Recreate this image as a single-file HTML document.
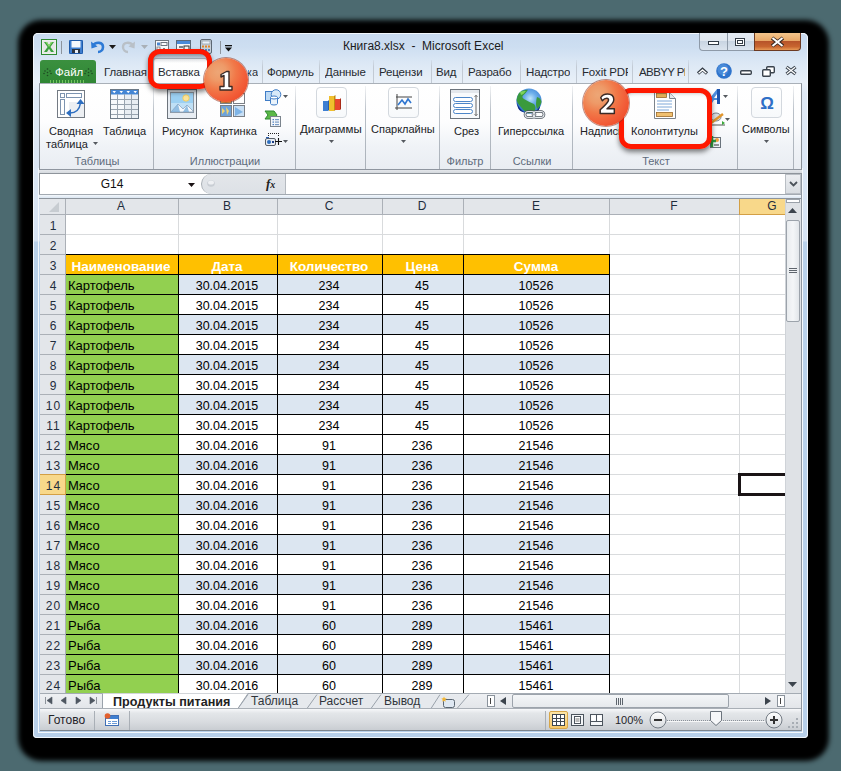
<!DOCTYPE html>
<html><head><meta charset="utf-8"><style>
html,body{margin:0;padding:0;}
body{width:841px;height:771px;position:relative;overflow:hidden;background:#4c6a70;font-family:"Liberation Sans", sans-serif;}
svg{overflow:visible}
</style></head><body>
<div style="position:absolute;left:33px;top:33px;width:775px;height:705px;background:#000;border-radius:8px;box-shadow:3px 5px 5px 18px #000;"></div><div style="position:absolute;left:33px;top:33px;width:775px;height:705px;background:linear-gradient(#c8daef 0px,#cddef1 14px,#dce8f5 30px,#e9f0f8 50px,#dfe9f5 60px,#d6e3f3 208px,#b9d1ea 209px,#b8d0ea);border-radius:5px 5px 4px 4px;box-shadow:inset 0 0 0 1px #f2f7fc;"></div><div style="position:absolute;left:38px;top:168px;width:765px;height:565px;border:1px solid #f4f8fc;box-sizing:border-box;"></div><div style="position:absolute;left:343px;top:40px;font-size:12px;line-height:1.149;white-space:nowrap;color:#1b1b1b;font-weight:normal;">Книга8.xlsx&nbsp; - &nbsp;Microsoft Excel</div><svg style="position:absolute;left:41px;top:39px;" width="16" height="16" viewBox="0 0 16 16"><rect x="0.5" y="0.5" width="15" height="15" fill="#f4f6f4" stroke="#2f8a32"/>
<rect x="1.5" y="1.5" width="13" height="13" fill="#e6e8e6"/>
<path d="M3 3h3l2 3.2L10 3h3l-3.6 5L13 13h-3l-2-3.3L6 13H3l3.6-5z" fill="#3aa23c"/>
<path d="M3 3h3l2 3.2L10 3h1.5L8 8 4.5 3z" fill="#8fdc6a"/></svg><svg style="position:absolute;left:61px;top:41px;" width="1" height="13" viewBox="0 0 1 13"><rect width="1" height="13" fill="#8d959e"/></svg><svg style="position:absolute;left:69px;top:40px;" width="14" height="14" viewBox="0 0 14 14"><rect x="0" y="0" width="14" height="14" rx="1" fill="#3f7fd0"/>
<rect x="2.5" y="0.5" width="9" height="7" fill="#f6f9fd"/>
<rect x="3" y="9" width="8" height="5" fill="#2c3440"/>
<rect x="6" y="10" width="3" height="3" fill="#e8eef6"/>
<rect x="0.5" y="0.5" width="13" height="13" rx="1" fill="none" stroke="#1f5aa8"/></svg><svg style="position:absolute;left:91px;top:40px;" width="14" height="13" viewBox="0 0 14 13"><path d="M2 5.5 C5 1.5 12 2 12 7 C12 10 9.5 12 7 12" fill="none" stroke="#2d7ad6" stroke-width="2.6"/>
<path d="M0 1.5 L0.5 8.5 L6.5 6.5z" fill="#2d7ad6"/></svg><svg style="position:absolute;left:109px;top:45px;" width="7" height="4" viewBox="0 0 7 4"><path d="M0 0h7L3.5 4z" fill="#1a1a1a"/></svg><svg style="position:absolute;left:122px;top:40px;" width="13" height="13" viewBox="0 0 13 13"><path d="M11 5.5 C8 1.5 1 2 1 7 C1 10 3.5 12 6 12" fill="none" stroke="#b9c0c7" stroke-width="2.4"/>
<path d="M13 1.5 L12.5 8.5 L6.5 6.5z" fill="#b9c0c7"/></svg><svg style="position:absolute;left:141px;top:45px;" width="7" height="4" viewBox="0 0 7 4"><path d="M0 0h7L3.5 4z" fill="#a9b0b7"/></svg><svg style="position:absolute;left:155px;top:40px;" width="14" height="13" viewBox="0 0 14 13"><rect x="0.5" y="0.5" width="13" height="12" fill="#fafbfc" stroke="#6f7780"/>
<rect x="2" y="2.5" width="3" height="3" fill="#4a86d0"/><rect x="6" y="2.5" width="6" height="3" fill="none" stroke="#6f7780"/>
<rect x="2" y="7" width="3" height="5" fill="none" stroke="#6f7780" stroke-width="0.8"/><path d="M9 8v4M7 10h4" stroke="#333" stroke-width="1.2"/></svg><svg style="position:absolute;left:176px;top:40px;" width="15" height="13" viewBox="0 0 15 13"><rect x="0.5" y="0.5" width="14" height="12" fill="#f4f6f8" stroke="#5c6a7a"/>
<rect x="1" y="1" width="13" height="3" fill="#4a8ad8"/>
<rect x="3" y="6" width="4" height="2" fill="#7a838c"/><rect x="8" y="6" width="5" height="4" fill="none" stroke="#333" stroke-width="1"/></svg><svg style="position:absolute;left:200px;top:39px;" width="12" height="15" viewBox="0 0 12 15"><rect x="0.5" y="0.5" width="11" height="14" rx="1.5" fill="#c9d3dd" stroke="#5d6873"/>
<rect x="2" y="2" width="8" height="3" fill="#e9f1fa" stroke="#7c8893" stroke-width="0.6"/>
<g fill="#e0862a"><rect x="2" y="6.5" width="2" height="2"/><rect x="5" y="6.5" width="2" height="2"/><rect x="8" y="6.5" width="2" height="2"/></g>
<g fill="#4f88c8"><rect x="2" y="10" width="2" height="2"/><rect x="5" y="10" width="2" height="2"/><rect x="8" y="10" width="2" height="2"/></g></svg><svg style="position:absolute;left:220px;top:41px;" width="1" height="13" viewBox="0 0 1 13"><rect width="1" height="13" fill="#8d959e"/></svg><svg style="position:absolute;left:225px;top:45px;" width="7" height="7" viewBox="0 0 7 7"><rect x="0" y="0" width="7" height="1.3" fill="#111"/><path d="M0 2.5h7L3.5 6.5z" fill="#111"/></svg><div style="position:absolute;left:699px;top:33px;width:28px;height:18px;background:linear-gradient(#e4ebf3,#dfe6ee 45%,#c9d5e2 50%,#dbe4ee);border:1px solid #8e9aa8;border-top:none;border-right:none;border-radius:0 0 0 4px;box-sizing:border-box;"></div><div style="position:absolute;left:727px;top:33px;width:27px;height:18px;background:linear-gradient(#e4ebf3,#dfe6ee 45%,#c9d5e2 50%,#dbe4ee);border:1px solid #8e9aa8;border-top:none;border-right:none;box-sizing:border-box;"></div><div style="position:absolute;left:754px;top:33px;width:47px;height:18px;background:linear-gradient(#f3c58c,#e9a968 45%,#b7542a 50%,#c8652f 80%,#e79a55);border:1px solid #6c3a22;border-top:none;border-radius:0 0 4px 0;box-sizing:border-box;"></div><svg style="position:absolute;left:708px;top:41px;" width="11" height="4" viewBox="0 0 11 4"><rect x="0.5" y="0.5" width="10" height="3" fill="#fff" stroke="#333c46"/></svg><svg style="position:absolute;left:735px;top:38px;" width="10" height="8" viewBox="0 0 10 8"><rect x="0.5" y="0.5" width="9" height="7" fill="#fff" stroke="#333c46"/><rect x="2.5" y="2.5" width="5" height="3" fill="none" stroke="#333c46"/></svg><svg style="position:absolute;left:771px;top:37px;" width="13" height="10" viewBox="0 0 13 10"><path d="M1 1 L12 9 M12 1 L1 9" stroke="#3a2a22" stroke-width="4"/><path d="M1.5 1 L11.5 9 M11.5 1 L1.5 9" stroke="#fff" stroke-width="2"/></svg><div style="position:absolute;left:40px;top:60px;width:56px;height:24px;background:linear-gradient(#3b903f,#2f8634);border-radius:3px 3px 0 0;"></div><div style="position:absolute;left:55px;top:66px;font-size:11.5px;line-height:1.149;white-space:nowrap;color:#ffffff;font-weight:normal;">Файл</div><svg style="position:absolute;left:43px;top:68px;" width="9" height="9" viewBox="0 0 9 9"><g fill="#1e4a22"><circle cx="4.5" cy="1" r="0.8"/><circle cx="2" cy="3" r="0.8"/><circle cx="7" cy="3" r="0.8"/><circle cx="4.5" cy="4.5" r="0.8"/><circle cx="1" cy="5.5" r="0.8"/><circle cx="8" cy="5.5" r="0.8"/><circle cx="4.5" cy="7.5" r="0.8"/></g></svg><svg style="position:absolute;left:84px;top:68px;" width="9" height="9" viewBox="0 0 9 9"><g fill="#1e4a22"><circle cx="4.5" cy="1" r="0.8"/><circle cx="2" cy="3" r="0.8"/><circle cx="7" cy="3" r="0.8"/><circle cx="4.5" cy="4.5" r="0.8"/><circle cx="1" cy="5.5" r="0.8"/><circle cx="8" cy="5.5" r="0.8"/><circle cx="4.5" cy="7.5" r="0.8"/></g></svg><div style="position:absolute;left:50px;top:80px;width:36px;height:3px;background:repeating-linear-gradient(90deg,#8fe070 0 1px,transparent 1px 3px);opacity:0.7;"></div><div style="position:absolute;left:153px;top:58px;width:55px;height:26px;background:linear-gradient(#ffffff,#fbfcfd);border:1px solid #aab2bc;border-bottom:none;border-radius:3px 3px 0 0;box-sizing:border-box;"></div><div style="position:absolute;left:104px;top:66px;width:80px;overflow:hidden;font-size:11.5px;letter-spacing:-0.15px;line-height:1.149;white-space:nowrap;color:#262a30">Главная</div><div style="position:absolute;left:158px;top:66px;width:80px;overflow:hidden;font-size:11.5px;letter-spacing:-0.15px;line-height:1.149;white-space:nowrap;color:#262a30">Вставка</div><div style="position:absolute;left:267px;top:66px;width:48px;overflow:hidden;font-size:11.5px;letter-spacing:-0.15px;line-height:1.149;white-space:nowrap;color:#262a30">Формуль</div><div style="position:absolute;left:325px;top:66px;width:80px;overflow:hidden;font-size:11.5px;letter-spacing:-0.15px;line-height:1.149;white-space:nowrap;color:#262a30">Данные</div><div style="position:absolute;left:379px;top:66px;width:45px;overflow:hidden;font-size:11.5px;letter-spacing:-0.15px;line-height:1.149;white-space:nowrap;color:#262a30">Рецензи</div><div style="position:absolute;left:436px;top:66px;width:80px;overflow:hidden;font-size:11.5px;letter-spacing:-0.15px;line-height:1.149;white-space:nowrap;color:#262a30">Вид</div><div style="position:absolute;left:468px;top:66px;width:47px;overflow:hidden;font-size:11.5px;letter-spacing:-0.15px;line-height:1.149;white-space:nowrap;color:#262a30">Разрабо</div><div style="position:absolute;left:526px;top:66px;width:44px;overflow:hidden;font-size:11.5px;letter-spacing:-0.15px;line-height:1.149;white-space:nowrap;color:#262a30">Надстро</div><div style="position:absolute;left:582px;top:66px;width:46px;overflow:hidden;font-size:11.5px;letter-spacing:-0.15px;line-height:1.149;white-space:nowrap;color:#262a30">Foxit PDF</div><div style="position:absolute;left:639px;top:66px;width:46px;overflow:hidden;font-size:11.5px;letter-spacing:-0.6px;line-height:1.149;white-space:nowrap;color:#262a30">ABBYY PDF</div><div style="position:absolute;left:248px;top:66px;width:10px;overflow:hidden;font-size:11px;line-height:1.149;white-space:nowrap;color:#2b2f36;direction:rtl">ка</div><div style="position:absolute;left:262px;top:60px;width:1px;height:23px;background:linear-gradient(rgba(190,200,212,0.3),#c2cad4 30%,#c2cad4);"></div><div style="position:absolute;left:319px;top:60px;width:1px;height:23px;background:linear-gradient(rgba(190,200,212,0.3),#c2cad4 30%,#c2cad4);"></div><div style="position:absolute;left:373px;top:60px;width:1px;height:23px;background:linear-gradient(rgba(190,200,212,0.3),#c2cad4 30%,#c2cad4);"></div><div style="position:absolute;left:431px;top:60px;width:1px;height:23px;background:linear-gradient(rgba(190,200,212,0.3),#c2cad4 30%,#c2cad4);"></div><div style="position:absolute;left:462px;top:60px;width:1px;height:23px;background:linear-gradient(rgba(190,200,212,0.3),#c2cad4 30%,#c2cad4);"></div><div style="position:absolute;left:520px;top:60px;width:1px;height:23px;background:linear-gradient(rgba(190,200,212,0.3),#c2cad4 30%,#c2cad4);"></div><div style="position:absolute;left:576px;top:60px;width:1px;height:23px;background:linear-gradient(rgba(190,200,212,0.3),#c2cad4 30%,#c2cad4);"></div><div style="position:absolute;left:632px;top:60px;width:1px;height:23px;background:linear-gradient(rgba(190,200,212,0.3),#c2cad4 30%,#c2cad4);"></div><div style="position:absolute;left:688px;top:60px;width:1px;height:23px;background:linear-gradient(rgba(190,200,212,0.3),#c2cad4 30%,#c2cad4);"></div><svg style="position:absolute;left:697px;top:68px;" width="11" height="7" viewBox="0 0 11 7"><path d="M1 5.5 L5.5 1.5 L10 5.5" fill="none" stroke="#333b45" stroke-width="3.2"/><path d="M1.6 5.2 L5.5 1.9 L9.4 5.2" fill="none" stroke="#fff" stroke-width="1.3"/></svg><svg style="position:absolute;left:716px;top:63px;" width="16" height="16" viewBox="0 0 16 16"><circle cx="8" cy="8" r="7.8" fill="#2f74cc"/><circle cx="7" cy="6.5" r="5.5" fill="#5b9ae0" opacity="0.6"/><text x="8" y="12.6" text-anchor="middle" font-family="Liberation Sans" font-weight="bold" font-size="13" fill="#fff">?</text></svg><svg style="position:absolute;left:740px;top:70px;" width="12" height="5" viewBox="0 0 12 5"><rect x="0.7" y="0.7" width="10.6" height="3.6" rx="1" fill="#fff" stroke="#3a434d" stroke-width="1.4"/></svg><svg style="position:absolute;left:762px;top:66px;" width="13" height="11" viewBox="0 0 13 11"><rect x="4.7" y="0.7" width="7.6" height="6" rx="1" fill="#fff" stroke="#3a434d" stroke-width="1.4"/><rect x="0.7" y="3.7" width="7.6" height="6.6" rx="1" fill="#fff" stroke="#3a434d" stroke-width="1.4"/></svg><svg style="position:absolute;left:785px;top:66px;" width="12" height="9" viewBox="0 0 12 9"><path d="M1.5 1 L10.5 8 M10.5 1 L1.5 8" stroke="#3a434d" stroke-width="3.4"/><path d="M1.8 1.2 L10.2 7.8 M10.2 1.2 L1.8 7.8" stroke="#fff" stroke-width="1.3"/></svg><div style="position:absolute;left:39px;top:83px;width:763px;height:87px;background:linear-gradient(#ffffff,#fdfdfe 45%,#f0f3f7 72%,#e9edf2);border:1px solid #8a9199;border-top-color:#a9b0b8;border-bottom-color:#8f969f;box-sizing:border-box;"></div><div style="position:absolute;left:39px;top:170px;width:763px;height:4px;background:linear-gradient(#e4e7eb,#d5d9de);border-bottom:1px solid #8e949b;box-sizing:border-box;"></div><div style="position:absolute;left:153px;top:86px;width:1px;height:83px;background:linear-gradient(rgba(190,196,204,0.2),#b9c0c8 30%,#aab1b9);"></div><div style="position:absolute;left:295px;top:86px;width:1px;height:83px;background:linear-gradient(rgba(190,196,204,0.2),#b9c0c8 30%,#aab1b9);"></div><div style="position:absolute;left:365px;top:86px;width:1px;height:83px;background:linear-gradient(rgba(190,196,204,0.2),#b9c0c8 30%,#aab1b9);"></div><div style="position:absolute;left:439px;top:86px;width:1px;height:83px;background:linear-gradient(rgba(190,196,204,0.2),#b9c0c8 30%,#aab1b9);"></div><div style="position:absolute;left:490px;top:86px;width:1px;height:83px;background:linear-gradient(rgba(190,196,204,0.2),#b9c0c8 30%,#aab1b9);"></div><div style="position:absolute;left:572px;top:86px;width:1px;height:83px;background:linear-gradient(rgba(190,196,204,0.2),#b9c0c8 30%,#aab1b9);"></div><div style="position:absolute;left:737px;top:86px;width:1px;height:83px;background:linear-gradient(rgba(190,196,204,0.2),#b9c0c8 30%,#aab1b9);"></div><div style="position:absolute;left:793px;top:86px;width:1px;height:83px;background:linear-gradient(rgba(190,196,204,0.2),#b9c0c8 30%,#aab1b9);"></div><svg style="position:absolute;left:57px;top:90px;" width="28" height="28" viewBox="0 0 28 28"><rect x="0.5" y="0.5" width="27" height="27" fill="#fff" stroke="#737a83"/>
<path d="M12 12 L27 12 L27 27 L12 27z" fill="#eceff3"/>
<rect x="3.5" y="3.5" width="4" height="4" fill="#fff" stroke="#7d94b0"/>
<rect x="9.5" y="3.5" width="15" height="4" fill="#fff" stroke="#7d94b0"/>
<rect x="3.5" y="9.5" width="4" height="15" fill="#fff" stroke="#7d94b0"/>
<path d="M13 23 Q22 23 23.5 13" fill="none" stroke="#2d6ec0" stroke-width="1.5"/>
<path d="M9 23 L14 19 L14 27z" fill="#2d6ec0"/><path d="M23.5 9 L19.5 14 L27.5 14z" fill="#2d6ec0"/></svg><svg style="position:absolute;left:110px;top:89px;" width="29" height="30" viewBox="0 0 29 30"><rect x="0.5" y="0.5" width="28" height="29" fill="#f7f9fb" stroke="#6c7986"/>
<rect x="1" y="1" width="27" height="4.5" fill="#4486d4"/>
<g fill="#e9eef3"><rect x="15" y="6" width="13" height="23"/></g>
<g stroke="#98a3ae" stroke-width="1"><path d="M1 10.5h27M1 15.5h27M1 20.5h27M1 25.5h27M7.5 5v24M14.5 5v24M21.5 5v24"/></g>
<g fill="#fff"><path d="M2.5 2h3.5l-1.75 2.2z M9.5 2h3.5l-1.75 2.2z M16.5 2h3.5l-1.75 2.2z M23.5 2h3.5l-1.75 2.2z"/></g></svg><div style="position:absolute;left:49px;top:125px;font-size:11px;line-height:1.149;white-space:nowrap;color:#202226;font-weight:normal;">Сводная</div><div style="position:absolute;left:46px;top:138px;font-size:11px;line-height:1.149;white-space:nowrap;color:#202226;font-weight:normal;">таблица</div><svg style="position:absolute;left:93px;top:142px;" width="5" height="3" viewBox="0 0 5 3"><path d="M0 0h5L2.5 3z" fill="#55595f"/></svg><div style="position:absolute;left:103px;top:125px;font-size:11px;line-height:1.149;white-space:nowrap;color:#202226;font-weight:normal;">Таблица</div><div style="position:absolute;left:-53px;width:300px;text-align:center;top:155px;font-size:11px;line-height:1.149;white-space:nowrap;color:#5e6b7c;font-weight:normal;">Таблицы</div><svg style="position:absolute;left:167px;top:89px;" width="30" height="30" viewBox="0 0 30 30"><rect x="0.5" y="0.5" width="29" height="29" fill="#e8edf3" stroke="#6d747c"/>
<rect x="3.5" y="3.5" width="23" height="20" fill="#bfe0f6" stroke="#8d96a0"/>
<rect x="4" y="4" width="22" height="10" fill="#9cd0f2"/>
<circle cx="19" cy="9" r="3.2" fill="#fbe39a" stroke="#f0c850" stroke-width="0.8"/>
<path d="M4 23 L11 15 L16 20 L20 16 L26 22 L26 23z" fill="#f4f8fc" stroke="#8fa6bf" stroke-width="0.8"/>
<path d="M11 15 L13 23 L4 23z M20 16 L22 23 L16 23z" fill="#6aa6d8" opacity="0.7"/></svg><svg style="position:absolute;left:220px;top:93px;" width="26" height="24" viewBox="0 0 26 24"><rect x="0.5" y="0.5" width="11" height="10" fill="#d9a44a" stroke="#7a7f86"/>
<rect x="13.5" y="0.5" width="11" height="10" fill="#fff" stroke="#7a7f86"/>
<rect x="0.5" y="12.5" width="11" height="11" fill="#6fa3d8" stroke="#7a7f86"/>
<path d="M2 15l3 3 -3 3 M6 14l3 4 -2 4" fill="#f4d46c"/>
<rect x="13.5" y="12.5" width="11" height="11" fill="#c9dff4" stroke="#7a7f86"/>
<path d="M15 14 L23 19 L15 23z" fill="#7fb4e6"/></svg><div style="position:absolute;left:162px;top:125px;font-size:11px;line-height:1.149;white-space:nowrap;color:#202226;font-weight:normal;">Рисунок</div><div style="position:absolute;left:210px;top:125px;font-size:11px;line-height:1.149;white-space:nowrap;color:#202226;font-weight:normal;">Картинка</div><div style="position:absolute;left:75px;width:300px;text-align:center;top:155px;font-size:11px;line-height:1.149;white-space:nowrap;color:#5e6b7c;font-weight:normal;">Иллюстрации</div><svg style="position:absolute;left:265px;top:89px;" width="16" height="16" viewBox="0 0 16 16"><rect x="0.5" y="2.5" width="9" height="9" fill="#bcd9f4" stroke="#3f7cc6"/>
<circle cx="11" cy="5.5" r="4.8" fill="#d7e9f9" stroke="#3f7cc6"/>
<path d="M5.5 8.5 v6 a3.5 1.5 0 0 0 7 0 v-6" fill="#eaf3fb" stroke="#3f7cc6"/>
<ellipse cx="9" cy="8.5" rx="3.5" ry="1.5" fill="#fff" stroke="#3f7cc6"/></svg><svg style="position:absolute;left:283px;top:95px;" width="5" height="3" viewBox="0 0 5 3"><path d="M0 0h5L2.5 3z" fill="#55595f"/></svg><svg style="position:absolute;left:265px;top:111px;" width="16" height="16" viewBox="0 0 16 16"><path d="M0 0 L9 0 L12 4 L9 8 L0 8 L3 4z" fill="#5cb848" stroke="#2f8a32"/>
<rect x="5.5" y="5.5" width="10" height="10" fill="#f5f7f9" stroke="#7b848d"/>
<g fill="#4a7fc2"><rect x="7.5" y="8" width="1.5" height="1.2"/><rect x="7.5" y="10.5" width="1.5" height="1.2"/><rect x="7.5" y="13" width="1.5" height="1.2"/></g>
<g fill="#7a9cc6"><rect x="10" y="8" width="4" height="1.2"/><rect x="10" y="10.5" width="4" height="1.2"/><rect x="10" y="13" width="4" height="1.2"/></g></svg><svg style="position:absolute;left:265px;top:133px;" width="18" height="14" viewBox="0 0 18 14"><g fill="#222"><rect x="3" y="0" width="1" height="1"/><rect x="5" y="0" width="1" height="1"/><rect x="7" y="0" width="1" height="1"/><rect x="9" y="0" width="1" height="1"/><rect x="11" y="0" width="1" height="1"/><rect x="13" y="0" width="1" height="1"/><rect x="3" y="2" width="1" height="1"/><rect x="13" y="2" width="1" height="1"/></g>
<rect x="0.5" y="5.5" width="10" height="7" rx="1.5" fill="#e9edf2" stroke="#555c64"/>
<circle cx="4" cy="9" r="2" fill="#2d6fc0"/><rect x="7" y="8" width="2" height="2" fill="#1c3e86"/><rect x="1" y="4" width="3" height="1.2" fill="#2d5fb0"/>
<path d="M13.5 5v7M10 8.5h7" stroke="#111" stroke-width="1.1"/></svg><svg style="position:absolute;left:283px;top:140px;" width="5" height="3" viewBox="0 0 5 3"><path d="M0 0h5L2.5 3z" fill="#55595f"/></svg><div style="position:absolute;left:316px;top:87px;width:31px;height:31px;border:1px solid #d3d8de;border-radius:4px;box-sizing:border-box;background:linear-gradient(#fff,#f7f9fb);"></div><svg style="position:absolute;left:323px;top:95px;" width="18" height="17" viewBox="0 0 18 17"><path d="M0 6 h5 v10 h-5z" fill="#3d7fd3"/><path d="M5 6 l1.5 -1.5 v10 l-1.5 1.5z" fill="#2a5fa8"/>
<path d="M6 1 h5 v15 h-5z" fill="#f0bf2d"/><path d="M11 1 l1.5 -1 v15 l-1.5 1z" fill="#c08a10"/>
<path d="M12 4 h5 v11 h-5z" fill="#e8452e"/><path d="M17 4 l1 -1 v11 l-1 1z" fill="#a82a18"/></svg><div style="position:absolute;left:300px;top:123px;font-size:11.5px;line-height:1.149;white-space:nowrap;color:#202226;font-weight:normal;">Диаграммы</div><svg style="position:absolute;left:329px;top:140px;" width="5" height="3" viewBox="0 0 5 3"><path d="M0 0h5L2.5 3z" fill="#55595f"/></svg><div style="position:absolute;left:388px;top:87px;width:31px;height:31px;border:1px solid #d3d8de;border-radius:4px;box-sizing:border-box;background:linear-gradient(#fff,#f7f9fb);"></div><svg style="position:absolute;left:395px;top:94px;" width="17" height="16" viewBox="0 0 17 16"><path d="M2 0v16M0 14h17M1 3h16" stroke="#444" stroke-width="1"/>
<path d="M3 11 L7 6 L10 10 L13 5 L16 9" fill="none" stroke="#2f76d0" stroke-width="1.6"/></svg><div style="position:absolute;left:371px;top:123px;font-size:11px;line-height:1.149;white-space:nowrap;color:#202226;font-weight:normal;">Спарклайны</div><svg style="position:absolute;left:401px;top:140px;" width="5" height="3" viewBox="0 0 5 3"><path d="M0 0h5L2.5 3z" fill="#55595f"/></svg><svg style="position:absolute;left:450px;top:89px;" width="30" height="30" viewBox="0 0 30 30"><rect x="0.5" y="0.5" width="29" height="29" fill="#f8fafc" stroke="#6d747c"/>
<rect x="1" y="1" width="28" height="3" fill="#e3e7ec"/>
<g fill="#fff" stroke="#4d86c8"><rect x="3.5" y="8.5" width="19" height="4" rx="2"/><rect x="3.5" y="14.5" width="19" height="4" rx="2"/><rect x="3.5" y="20.5" width="19" height="4" rx="2"/></g>
<path d="M26 7v19" stroke="#666" stroke-width="1"/><path d="M24.5 8l1.5-2 1.5 2M24.5 25l1.5 2 1.5-2" fill="none" stroke="#666" stroke-width="0.8"/></svg><div style="position:absolute;left:454px;top:125px;font-size:11px;line-height:1.149;white-space:nowrap;color:#202226;font-weight:normal;">Срез</div><div style="position:absolute;left:315px;width:300px;text-align:center;top:155px;font-size:11px;line-height:1.149;white-space:nowrap;color:#5e6b7c;font-weight:normal;">Фильтр</div><svg style="position:absolute;left:515px;top:88px;" width="34" height="33" viewBox="0 0 34 33"><defs><radialGradient id="gl" cx="0.55" cy="0.4" r="0.65"><stop offset="0" stop-color="#bfe6fa"/><stop offset="0.35" stop-color="#6fb0ea"/><stop offset="0.8" stop-color="#3a7fd4"/><stop offset="1" stop-color="#1c4aa0"/></radialGradient></defs>
<circle cx="14" cy="13" r="12.6" fill="url(#gl)"/>
<path d="M4 5 Q8 1.5 13 1.8 Q11 5 8.5 7 Q6 9 9 11 Q14 14 19 16 Q22 19 19 24 Q16 25.5 12 25 Q8 22 5 18 Q2 15 1.6 12 Q2 8 4 5z" fill="#3a9a3c"/>
<path d="M5 4 Q8 2.5 11 3 Q9 6 6 7z" fill="#7ed35a"/>
<path d="M22 9 Q26 10 26.5 14 Q25 19 22 21 Q20 16 22 9z" fill="#3a9a3c"/>
<path d="M2 15 Q4 21 9 24 Q5 24 3 20z M19 24 Q23 22 25 18 Q25 22 21 24.5z" fill="#0c2a86"/>
<g fill="none" stroke="#4d555e" stroke-width="2.6"><rect x="10" y="23.5" width="10" height="6" rx="3"/><rect x="18" y="23.5" width="11" height="6" rx="3"/></g>
<g fill="none" stroke="#e4e8ec" stroke-width="1.1"><rect x="10" y="23.5" width="10" height="6" rx="3"/><rect x="18" y="23.5" width="11" height="6" rx="3"/></g></svg><div style="position:absolute;left:498px;top:125px;font-size:11px;line-height:1.149;white-space:nowrap;color:#202226;font-weight:normal;">Гиперссылка</div><div style="position:absolute;left:382px;width:300px;text-align:center;top:155px;font-size:11px;line-height:1.149;white-space:nowrap;color:#5e6b7c;font-weight:normal;">Ссылки</div><div style="position:absolute;left:580px;top:125px;font-size:11px;line-height:1.149;white-space:nowrap;color:#202226;font-weight:normal;">Надпись</div><svg style="position:absolute;left:654px;top:92px;" width="22" height="27" viewBox="0 0 22 27"><path d="M0.5 0.5 H15.5 L21.5 6.5 V26.5 H0.5z" fill="#fff" stroke="#7c838b"/>
<path d="M15.5 0.5 V6.5 H21.5" fill="#e6eaee" stroke="#7c838b"/>
<rect x="2.5" y="1.5" width="10" height="4" fill="#e7b25a" stroke="#9c6a2a" stroke-width="0.8"/>
<g stroke="#7fa8d8" stroke-width="1"><path d="M3 9h15M3 12h15M3 15h15M3 18h12"/></g>
<rect x="2.5" y="20.5" width="16" height="4" fill="#f0c070" stroke="#9c6a2a" stroke-width="0.8"/></svg><div style="position:absolute;left:631px;top:125px;font-size:11px;line-height:1.149;white-space:nowrap;color:#202226;font-weight:normal;">Колонтитулы</div><div style="position:absolute;left:506px;width:300px;text-align:center;top:155px;font-size:11px;line-height:1.149;white-space:nowrap;color:#5e6b7c;font-weight:normal;">Текст</div><svg style="position:absolute;left:710px;top:89px;" width="11" height="15" viewBox="0 0 11 15"><path d="M0 9 L7 0 L10 0 L10 15 L7 15 L7 11 L4 11 L2 14z" fill="#4e8ee0"/><path d="M7 0 L10 0 L10 15 L7 15z" fill="#1f56b0"/><path d="M4 9 L7 5 L7 9z" fill="#fff"/></svg><svg style="position:absolute;left:723px;top:95px;" width="5" height="3" viewBox="0 0 5 3"><path d="M0 0h5L2.5 3z" fill="#55595f"/></svg><svg style="position:absolute;left:710px;top:112px;" width="15" height="14" viewBox="0 0 15 14"><ellipse cx="6" cy="5" rx="5" ry="4" fill="#d8dde3" stroke="#7a838c"/><path d="M1 11 L13 2" stroke="#e2962c" stroke-width="2.4"/><path d="M1 13h14" stroke="#555" stroke-width="1"/><path d="M12 9 L15 11 L12 13z" fill="#3aa83a"/></svg><svg style="position:absolute;left:725px;top:118px;" width="5" height="3" viewBox="0 0 5 3"><path d="M0 0h5L2.5 3z" fill="#55595f"/></svg><svg style="position:absolute;left:707px;top:135px;" width="14" height="13" viewBox="0 0 14 13"><rect x="3.5" y="2.5" width="10" height="10" fill="#eef3f8" stroke="#6a737c"/><circle cx="10" cy="5" r="2" fill="#f0a040"/><path d="M5 1v11M1 6h8" stroke="#2f9a3a" stroke-width="2.4"/><path d="M7 10h5" stroke="#333" stroke-width="1"/></svg><div style="position:absolute;left:751px;top:87px;width:31px;height:31px;border:1px solid #d3d8de;border-radius:4px;box-sizing:border-box;background:linear-gradient(#fff,#f7f9fb);"></div><div style="position:absolute;left:617px;width:300px;text-align:center;top:94px;font-size:17px;line-height:1.149;white-space:nowrap;color:#2f6fc7;font-weight:bold;">Ω</div><div style="position:absolute;left:742px;top:123px;font-size:11px;line-height:1.149;white-space:nowrap;color:#202226;font-weight:normal;">Символы</div><svg style="position:absolute;left:764px;top:140px;" width="5" height="3" viewBox="0 0 5 3"><path d="M0 0h5L2.5 3z" fill="#55595f"/></svg><div style="position:absolute;left:39px;top:174px;width:762px;height:20px;background:#fff;border-left:1px solid #8e949b;box-sizing:border-box;"></div><div style="position:absolute;left:39px;top:194px;width:762px;height:5px;background:linear-gradient(#f4f8fc,#dbe6f2);border-top:1px solid #a3aab2;border-bottom:1px solid #8e959d;box-sizing:border-box;"></div><div style="position:absolute;left:-38px;width:300px;text-align:center;top:178px;font-size:12px;line-height:1.149;white-space:nowrap;color:#111;font-weight:normal;">G14</div><svg style="position:absolute;left:188px;top:183px;" width="7" height="4" viewBox="0 0 7 4"><path d="M0 0h7L3.5 4z" fill="#1a1214"/></svg><div style="position:absolute;left:201px;top:174px;width:85px;height:20px;background:linear-gradient(#e3e6ea,#dde1e6);border-left:1px solid #a8aeb5;border-right:1px solid #b5bac0;border-radius:10px 0 0 10px;box-sizing:border-box;"></div><svg style="position:absolute;left:207px;top:180px;" width="8" height="7" viewBox="0 0 8 7"><ellipse cx="4" cy="3.5" rx="3.8" ry="3.3" fill="#c9ced4"/><ellipse cx="4" cy="2.5" rx="3" ry="2" fill="#eef0f3"/></svg><div style="position:absolute;left:266px;top:177px;font-family:'Liberation Serif',serif;font-style:italic;font-weight:bold;font-size:13px;line-height:1;color:#222">f<span style="font-size:10px;position:relative;top:0px">x</span></div><div style="position:absolute;left:785px;top:174px;width:16px;height:20px;background:linear-gradient(#eceef1,#d9dde2);border:1px solid #b9bec4;box-sizing:border-box;"></div><svg style="position:absolute;left:789px;top:181px;" width="9" height="6" viewBox="0 0 9 6"><path d="M1 1 L4.5 4.5 L8 1" fill="none" stroke="#4c535b" stroke-width="1.8"/></svg><div style="position:absolute;left:40px;top:199px;width:745px;height:15px;background:#e3e6ea;"></div><div style="position:absolute;left:40px;top:214px;width:25px;height:480px;background:#e3e6ea;"></div><div style="position:absolute;left:66px;top:215px;width:719px;height:479px;background:#fff;"></div><div style="position:absolute;left:66px;top:214px;width:719px;height:1px;background:#d9dbdd;"></div><div style="position:absolute;left:66px;top:234px;width:719px;height:1px;background:#d9dbdd;"></div><div style="position:absolute;left:66px;top:254px;width:719px;height:1px;background:#d9dbdd;"></div><div style="position:absolute;left:66px;top:274px;width:719px;height:1px;background:#d9dbdd;"></div><div style="position:absolute;left:66px;top:294px;width:719px;height:1px;background:#d9dbdd;"></div><div style="position:absolute;left:66px;top:314px;width:719px;height:1px;background:#d9dbdd;"></div><div style="position:absolute;left:66px;top:334px;width:719px;height:1px;background:#d9dbdd;"></div><div style="position:absolute;left:66px;top:354px;width:719px;height:1px;background:#d9dbdd;"></div><div style="position:absolute;left:66px;top:374px;width:719px;height:1px;background:#d9dbdd;"></div><div style="position:absolute;left:66px;top:394px;width:719px;height:1px;background:#d9dbdd;"></div><div style="position:absolute;left:66px;top:414px;width:719px;height:1px;background:#d9dbdd;"></div><div style="position:absolute;left:66px;top:434px;width:719px;height:1px;background:#d9dbdd;"></div><div style="position:absolute;left:66px;top:454px;width:719px;height:1px;background:#d9dbdd;"></div><div style="position:absolute;left:66px;top:474px;width:719px;height:1px;background:#d9dbdd;"></div><div style="position:absolute;left:66px;top:494px;width:719px;height:1px;background:#d9dbdd;"></div><div style="position:absolute;left:66px;top:514px;width:719px;height:1px;background:#d9dbdd;"></div><div style="position:absolute;left:66px;top:534px;width:719px;height:1px;background:#d9dbdd;"></div><div style="position:absolute;left:66px;top:554px;width:719px;height:1px;background:#d9dbdd;"></div><div style="position:absolute;left:66px;top:574px;width:719px;height:1px;background:#d9dbdd;"></div><div style="position:absolute;left:66px;top:594px;width:719px;height:1px;background:#d9dbdd;"></div><div style="position:absolute;left:66px;top:614px;width:719px;height:1px;background:#d9dbdd;"></div><div style="position:absolute;left:66px;top:634px;width:719px;height:1px;background:#d9dbdd;"></div><div style="position:absolute;left:66px;top:654px;width:719px;height:1px;background:#d9dbdd;"></div><div style="position:absolute;left:66px;top:674px;width:719px;height:1px;background:#d9dbdd;"></div><div style="position:absolute;left:66px;top:694px;width:719px;height:1px;background:#d9dbdd;"></div><div style="position:absolute;left:178px;top:215px;width:1px;height:479px;background:#d9dbdd;"></div><div style="position:absolute;left:277px;top:215px;width:1px;height:479px;background:#d9dbdd;"></div><div style="position:absolute;left:382px;top:215px;width:1px;height:479px;background:#d9dbdd;"></div><div style="position:absolute;left:463px;top:215px;width:1px;height:479px;background:#d9dbdd;"></div><div style="position:absolute;left:609px;top:215px;width:1px;height:479px;background:#d9dbdd;"></div><div style="position:absolute;left:739px;top:215px;width:1px;height:479px;background:#d9dbdd;"></div><div style="position:absolute;left:65px;top:254px;width:114px;height:21px;background:#ffc000;border:1px solid #000;box-sizing:border-box;"></div><div style="position:absolute;left:178px;top:254px;width:100px;height:21px;background:#ffc000;border:1px solid #000;box-sizing:border-box;"></div><div style="position:absolute;left:277px;top:254px;width:106px;height:21px;background:#ffc000;border:1px solid #000;box-sizing:border-box;"></div><div style="position:absolute;left:382px;top:254px;width:82px;height:21px;background:#ffc000;border:1px solid #000;box-sizing:border-box;"></div><div style="position:absolute;left:463px;top:254px;width:147px;height:21px;background:#ffc000;border:1px solid #000;box-sizing:border-box;"></div><div style="position:absolute;left:65px;top:274px;width:114px;height:21px;background:#92d050;border:1px solid #000;box-sizing:border-box;"></div><div style="position:absolute;left:178px;top:274px;width:100px;height:21px;background:#dce6f1;border:1px solid #000;box-sizing:border-box;"></div><div style="position:absolute;left:277px;top:274px;width:106px;height:21px;background:#dce6f1;border:1px solid #000;box-sizing:border-box;"></div><div style="position:absolute;left:382px;top:274px;width:82px;height:21px;background:#dce6f1;border:1px solid #000;box-sizing:border-box;"></div><div style="position:absolute;left:463px;top:274px;width:147px;height:21px;background:#dce6f1;border:1px solid #000;box-sizing:border-box;"></div><div style="position:absolute;left:65px;top:294px;width:114px;height:21px;background:#92d050;border:1px solid #000;box-sizing:border-box;"></div><div style="position:absolute;left:178px;top:294px;width:100px;height:21px;background:#ffffff;border:1px solid #000;box-sizing:border-box;"></div><div style="position:absolute;left:277px;top:294px;width:106px;height:21px;background:#ffffff;border:1px solid #000;box-sizing:border-box;"></div><div style="position:absolute;left:382px;top:294px;width:82px;height:21px;background:#ffffff;border:1px solid #000;box-sizing:border-box;"></div><div style="position:absolute;left:463px;top:294px;width:147px;height:21px;background:#ffffff;border:1px solid #000;box-sizing:border-box;"></div><div style="position:absolute;left:65px;top:314px;width:114px;height:21px;background:#92d050;border:1px solid #000;box-sizing:border-box;"></div><div style="position:absolute;left:178px;top:314px;width:100px;height:21px;background:#dce6f1;border:1px solid #000;box-sizing:border-box;"></div><div style="position:absolute;left:277px;top:314px;width:106px;height:21px;background:#dce6f1;border:1px solid #000;box-sizing:border-box;"></div><div style="position:absolute;left:382px;top:314px;width:82px;height:21px;background:#dce6f1;border:1px solid #000;box-sizing:border-box;"></div><div style="position:absolute;left:463px;top:314px;width:147px;height:21px;background:#dce6f1;border:1px solid #000;box-sizing:border-box;"></div><div style="position:absolute;left:65px;top:334px;width:114px;height:21px;background:#92d050;border:1px solid #000;box-sizing:border-box;"></div><div style="position:absolute;left:178px;top:334px;width:100px;height:21px;background:#ffffff;border:1px solid #000;box-sizing:border-box;"></div><div style="position:absolute;left:277px;top:334px;width:106px;height:21px;background:#ffffff;border:1px solid #000;box-sizing:border-box;"></div><div style="position:absolute;left:382px;top:334px;width:82px;height:21px;background:#ffffff;border:1px solid #000;box-sizing:border-box;"></div><div style="position:absolute;left:463px;top:334px;width:147px;height:21px;background:#ffffff;border:1px solid #000;box-sizing:border-box;"></div><div style="position:absolute;left:65px;top:354px;width:114px;height:21px;background:#92d050;border:1px solid #000;box-sizing:border-box;"></div><div style="position:absolute;left:178px;top:354px;width:100px;height:21px;background:#dce6f1;border:1px solid #000;box-sizing:border-box;"></div><div style="position:absolute;left:277px;top:354px;width:106px;height:21px;background:#dce6f1;border:1px solid #000;box-sizing:border-box;"></div><div style="position:absolute;left:382px;top:354px;width:82px;height:21px;background:#dce6f1;border:1px solid #000;box-sizing:border-box;"></div><div style="position:absolute;left:463px;top:354px;width:147px;height:21px;background:#dce6f1;border:1px solid #000;box-sizing:border-box;"></div><div style="position:absolute;left:65px;top:374px;width:114px;height:21px;background:#92d050;border:1px solid #000;box-sizing:border-box;"></div><div style="position:absolute;left:178px;top:374px;width:100px;height:21px;background:#ffffff;border:1px solid #000;box-sizing:border-box;"></div><div style="position:absolute;left:277px;top:374px;width:106px;height:21px;background:#ffffff;border:1px solid #000;box-sizing:border-box;"></div><div style="position:absolute;left:382px;top:374px;width:82px;height:21px;background:#ffffff;border:1px solid #000;box-sizing:border-box;"></div><div style="position:absolute;left:463px;top:374px;width:147px;height:21px;background:#ffffff;border:1px solid #000;box-sizing:border-box;"></div><div style="position:absolute;left:65px;top:394px;width:114px;height:21px;background:#92d050;border:1px solid #000;box-sizing:border-box;"></div><div style="position:absolute;left:178px;top:394px;width:100px;height:21px;background:#dce6f1;border:1px solid #000;box-sizing:border-box;"></div><div style="position:absolute;left:277px;top:394px;width:106px;height:21px;background:#dce6f1;border:1px solid #000;box-sizing:border-box;"></div><div style="position:absolute;left:382px;top:394px;width:82px;height:21px;background:#dce6f1;border:1px solid #000;box-sizing:border-box;"></div><div style="position:absolute;left:463px;top:394px;width:147px;height:21px;background:#dce6f1;border:1px solid #000;box-sizing:border-box;"></div><div style="position:absolute;left:65px;top:414px;width:114px;height:21px;background:#92d050;border:1px solid #000;box-sizing:border-box;"></div><div style="position:absolute;left:178px;top:414px;width:100px;height:21px;background:#ffffff;border:1px solid #000;box-sizing:border-box;"></div><div style="position:absolute;left:277px;top:414px;width:106px;height:21px;background:#ffffff;border:1px solid #000;box-sizing:border-box;"></div><div style="position:absolute;left:382px;top:414px;width:82px;height:21px;background:#ffffff;border:1px solid #000;box-sizing:border-box;"></div><div style="position:absolute;left:463px;top:414px;width:147px;height:21px;background:#ffffff;border:1px solid #000;box-sizing:border-box;"></div><div style="position:absolute;left:65px;top:434px;width:114px;height:21px;background:#92d050;border:1px solid #000;box-sizing:border-box;"></div><div style="position:absolute;left:178px;top:434px;width:100px;height:21px;background:#ffffff;border:1px solid #000;box-sizing:border-box;"></div><div style="position:absolute;left:277px;top:434px;width:106px;height:21px;background:#ffffff;border:1px solid #000;box-sizing:border-box;"></div><div style="position:absolute;left:382px;top:434px;width:82px;height:21px;background:#ffffff;border:1px solid #000;box-sizing:border-box;"></div><div style="position:absolute;left:463px;top:434px;width:147px;height:21px;background:#ffffff;border:1px solid #000;box-sizing:border-box;"></div><div style="position:absolute;left:65px;top:454px;width:114px;height:21px;background:#92d050;border:1px solid #000;box-sizing:border-box;"></div><div style="position:absolute;left:178px;top:454px;width:100px;height:21px;background:#dce6f1;border:1px solid #000;box-sizing:border-box;"></div><div style="position:absolute;left:277px;top:454px;width:106px;height:21px;background:#dce6f1;border:1px solid #000;box-sizing:border-box;"></div><div style="position:absolute;left:382px;top:454px;width:82px;height:21px;background:#dce6f1;border:1px solid #000;box-sizing:border-box;"></div><div style="position:absolute;left:463px;top:454px;width:147px;height:21px;background:#dce6f1;border:1px solid #000;box-sizing:border-box;"></div><div style="position:absolute;left:65px;top:474px;width:114px;height:21px;background:#92d050;border:1px solid #000;box-sizing:border-box;"></div><div style="position:absolute;left:178px;top:474px;width:100px;height:21px;background:#ffffff;border:1px solid #000;box-sizing:border-box;"></div><div style="position:absolute;left:277px;top:474px;width:106px;height:21px;background:#ffffff;border:1px solid #000;box-sizing:border-box;"></div><div style="position:absolute;left:382px;top:474px;width:82px;height:21px;background:#ffffff;border:1px solid #000;box-sizing:border-box;"></div><div style="position:absolute;left:463px;top:474px;width:147px;height:21px;background:#ffffff;border:1px solid #000;box-sizing:border-box;"></div><div style="position:absolute;left:65px;top:494px;width:114px;height:21px;background:#92d050;border:1px solid #000;box-sizing:border-box;"></div><div style="position:absolute;left:178px;top:494px;width:100px;height:21px;background:#dce6f1;border:1px solid #000;box-sizing:border-box;"></div><div style="position:absolute;left:277px;top:494px;width:106px;height:21px;background:#dce6f1;border:1px solid #000;box-sizing:border-box;"></div><div style="position:absolute;left:382px;top:494px;width:82px;height:21px;background:#dce6f1;border:1px solid #000;box-sizing:border-box;"></div><div style="position:absolute;left:463px;top:494px;width:147px;height:21px;background:#dce6f1;border:1px solid #000;box-sizing:border-box;"></div><div style="position:absolute;left:65px;top:514px;width:114px;height:21px;background:#92d050;border:1px solid #000;box-sizing:border-box;"></div><div style="position:absolute;left:178px;top:514px;width:100px;height:21px;background:#ffffff;border:1px solid #000;box-sizing:border-box;"></div><div style="position:absolute;left:277px;top:514px;width:106px;height:21px;background:#ffffff;border:1px solid #000;box-sizing:border-box;"></div><div style="position:absolute;left:382px;top:514px;width:82px;height:21px;background:#ffffff;border:1px solid #000;box-sizing:border-box;"></div><div style="position:absolute;left:463px;top:514px;width:147px;height:21px;background:#ffffff;border:1px solid #000;box-sizing:border-box;"></div><div style="position:absolute;left:65px;top:534px;width:114px;height:21px;background:#92d050;border:1px solid #000;box-sizing:border-box;"></div><div style="position:absolute;left:178px;top:534px;width:100px;height:21px;background:#dce6f1;border:1px solid #000;box-sizing:border-box;"></div><div style="position:absolute;left:277px;top:534px;width:106px;height:21px;background:#dce6f1;border:1px solid #000;box-sizing:border-box;"></div><div style="position:absolute;left:382px;top:534px;width:82px;height:21px;background:#dce6f1;border:1px solid #000;box-sizing:border-box;"></div><div style="position:absolute;left:463px;top:534px;width:147px;height:21px;background:#dce6f1;border:1px solid #000;box-sizing:border-box;"></div><div style="position:absolute;left:65px;top:554px;width:114px;height:21px;background:#92d050;border:1px solid #000;box-sizing:border-box;"></div><div style="position:absolute;left:178px;top:554px;width:100px;height:21px;background:#ffffff;border:1px solid #000;box-sizing:border-box;"></div><div style="position:absolute;left:277px;top:554px;width:106px;height:21px;background:#ffffff;border:1px solid #000;box-sizing:border-box;"></div><div style="position:absolute;left:382px;top:554px;width:82px;height:21px;background:#ffffff;border:1px solid #000;box-sizing:border-box;"></div><div style="position:absolute;left:463px;top:554px;width:147px;height:21px;background:#ffffff;border:1px solid #000;box-sizing:border-box;"></div><div style="position:absolute;left:65px;top:574px;width:114px;height:21px;background:#92d050;border:1px solid #000;box-sizing:border-box;"></div><div style="position:absolute;left:178px;top:574px;width:100px;height:21px;background:#dce6f1;border:1px solid #000;box-sizing:border-box;"></div><div style="position:absolute;left:277px;top:574px;width:106px;height:21px;background:#dce6f1;border:1px solid #000;box-sizing:border-box;"></div><div style="position:absolute;left:382px;top:574px;width:82px;height:21px;background:#dce6f1;border:1px solid #000;box-sizing:border-box;"></div><div style="position:absolute;left:463px;top:574px;width:147px;height:21px;background:#dce6f1;border:1px solid #000;box-sizing:border-box;"></div><div style="position:absolute;left:65px;top:594px;width:114px;height:21px;background:#92d050;border:1px solid #000;box-sizing:border-box;"></div><div style="position:absolute;left:178px;top:594px;width:100px;height:21px;background:#ffffff;border:1px solid #000;box-sizing:border-box;"></div><div style="position:absolute;left:277px;top:594px;width:106px;height:21px;background:#ffffff;border:1px solid #000;box-sizing:border-box;"></div><div style="position:absolute;left:382px;top:594px;width:82px;height:21px;background:#ffffff;border:1px solid #000;box-sizing:border-box;"></div><div style="position:absolute;left:463px;top:594px;width:147px;height:21px;background:#ffffff;border:1px solid #000;box-sizing:border-box;"></div><div style="position:absolute;left:65px;top:614px;width:114px;height:21px;background:#92d050;border:1px solid #000;box-sizing:border-box;"></div><div style="position:absolute;left:178px;top:614px;width:100px;height:21px;background:#dce6f1;border:1px solid #000;box-sizing:border-box;"></div><div style="position:absolute;left:277px;top:614px;width:106px;height:21px;background:#dce6f1;border:1px solid #000;box-sizing:border-box;"></div><div style="position:absolute;left:382px;top:614px;width:82px;height:21px;background:#dce6f1;border:1px solid #000;box-sizing:border-box;"></div><div style="position:absolute;left:463px;top:614px;width:147px;height:21px;background:#dce6f1;border:1px solid #000;box-sizing:border-box;"></div><div style="position:absolute;left:65px;top:634px;width:114px;height:21px;background:#92d050;border:1px solid #000;box-sizing:border-box;"></div><div style="position:absolute;left:178px;top:634px;width:100px;height:21px;background:#ffffff;border:1px solid #000;box-sizing:border-box;"></div><div style="position:absolute;left:277px;top:634px;width:106px;height:21px;background:#ffffff;border:1px solid #000;box-sizing:border-box;"></div><div style="position:absolute;left:382px;top:634px;width:82px;height:21px;background:#ffffff;border:1px solid #000;box-sizing:border-box;"></div><div style="position:absolute;left:463px;top:634px;width:147px;height:21px;background:#ffffff;border:1px solid #000;box-sizing:border-box;"></div><div style="position:absolute;left:65px;top:654px;width:114px;height:21px;background:#92d050;border:1px solid #000;box-sizing:border-box;"></div><div style="position:absolute;left:178px;top:654px;width:100px;height:21px;background:#dce6f1;border:1px solid #000;box-sizing:border-box;"></div><div style="position:absolute;left:277px;top:654px;width:106px;height:21px;background:#dce6f1;border:1px solid #000;box-sizing:border-box;"></div><div style="position:absolute;left:382px;top:654px;width:82px;height:21px;background:#dce6f1;border:1px solid #000;box-sizing:border-box;"></div><div style="position:absolute;left:463px;top:654px;width:147px;height:21px;background:#dce6f1;border:1px solid #000;box-sizing:border-box;"></div><div style="position:absolute;left:65px;top:674px;width:114px;height:21px;background:#92d050;border:1px solid #000;box-sizing:border-box;"></div><div style="position:absolute;left:178px;top:674px;width:100px;height:21px;background:#ffffff;border:1px solid #000;box-sizing:border-box;"></div><div style="position:absolute;left:277px;top:674px;width:106px;height:21px;background:#ffffff;border:1px solid #000;box-sizing:border-box;"></div><div style="position:absolute;left:382px;top:674px;width:82px;height:21px;background:#ffffff;border:1px solid #000;box-sizing:border-box;"></div><div style="position:absolute;left:463px;top:674px;width:147px;height:21px;background:#ffffff;border:1px solid #000;box-sizing:border-box;"></div><div style="position:absolute;left:65px;top:199px;width:1px;height:15px;background:#abb0b7;"></div><div style="position:absolute;left:178px;top:199px;width:1px;height:15px;background:#abb0b7;"></div><div style="position:absolute;left:277px;top:199px;width:1px;height:15px;background:#abb0b7;"></div><div style="position:absolute;left:382px;top:199px;width:1px;height:15px;background:#abb0b7;"></div><div style="position:absolute;left:463px;top:199px;width:1px;height:15px;background:#abb0b7;"></div><div style="position:absolute;left:609px;top:199px;width:1px;height:15px;background:#abb0b7;"></div><div style="position:absolute;left:739px;top:199px;width:1px;height:15px;background:#abb0b7;"></div><div style="position:absolute;left:40px;top:214px;width:745px;height:1px;background:#abb0b7;"></div><div style="position:absolute;left:65px;top:199px;width:1px;height:495px;background:#abb0b7;"></div><div style="position:absolute;left:40px;top:234px;width:25px;height:1px;background:#abb0b7;"></div><div style="position:absolute;left:40px;top:254px;width:25px;height:1px;background:#abb0b7;"></div><div style="position:absolute;left:40px;top:274px;width:25px;height:1px;background:#abb0b7;"></div><div style="position:absolute;left:40px;top:294px;width:25px;height:1px;background:#abb0b7;"></div><div style="position:absolute;left:40px;top:314px;width:25px;height:1px;background:#abb0b7;"></div><div style="position:absolute;left:40px;top:334px;width:25px;height:1px;background:#abb0b7;"></div><div style="position:absolute;left:40px;top:354px;width:25px;height:1px;background:#abb0b7;"></div><div style="position:absolute;left:40px;top:374px;width:25px;height:1px;background:#abb0b7;"></div><div style="position:absolute;left:40px;top:394px;width:25px;height:1px;background:#abb0b7;"></div><div style="position:absolute;left:40px;top:414px;width:25px;height:1px;background:#abb0b7;"></div><div style="position:absolute;left:40px;top:434px;width:25px;height:1px;background:#abb0b7;"></div><div style="position:absolute;left:40px;top:454px;width:25px;height:1px;background:#abb0b7;"></div><div style="position:absolute;left:40px;top:474px;width:25px;height:1px;background:#abb0b7;"></div><div style="position:absolute;left:40px;top:494px;width:25px;height:1px;background:#abb0b7;"></div><div style="position:absolute;left:40px;top:514px;width:25px;height:1px;background:#abb0b7;"></div><div style="position:absolute;left:40px;top:534px;width:25px;height:1px;background:#abb0b7;"></div><div style="position:absolute;left:40px;top:554px;width:25px;height:1px;background:#abb0b7;"></div><div style="position:absolute;left:40px;top:574px;width:25px;height:1px;background:#abb0b7;"></div><div style="position:absolute;left:40px;top:594px;width:25px;height:1px;background:#abb0b7;"></div><div style="position:absolute;left:40px;top:614px;width:25px;height:1px;background:#abb0b7;"></div><div style="position:absolute;left:40px;top:634px;width:25px;height:1px;background:#abb0b7;"></div><div style="position:absolute;left:40px;top:654px;width:25px;height:1px;background:#abb0b7;"></div><div style="position:absolute;left:40px;top:674px;width:25px;height:1px;background:#abb0b7;"></div><div style="position:absolute;left:40px;top:694px;width:25px;height:1px;background:#abb0b7;"></div><div style="position:absolute;left:739px;top:199px;width:46px;height:16px;background:#f8d88a;border-left:1px solid #d39f45;border-bottom:1px solid #d39f45;box-sizing:border-box;"></div><div style="position:absolute;left:40px;top:474px;width:26px;height:21px;background:#f8d88a;border:1px solid #d39f45;border-left:none;box-sizing:border-box;"></div><svg style="position:absolute;left:49px;top:202px;" width="10" height="10" viewBox="0 0 10 10"><path d="M10 0 L10 10 L0 10z" fill="#c7ccd1"/></svg><div style="position:absolute;left:-29px;width:300px;text-align:center;top:200px;font-size:12px;line-height:1.149;white-space:nowrap;color:#1f2d3d;font-weight:normal;">A</div><div style="position:absolute;left:77px;width:300px;text-align:center;top:200px;font-size:12px;line-height:1.149;white-space:nowrap;color:#1f2d3d;font-weight:normal;">B</div><div style="position:absolute;left:179px;width:300px;text-align:center;top:200px;font-size:12px;line-height:1.149;white-space:nowrap;color:#1f2d3d;font-weight:normal;">C</div><div style="position:absolute;left:272px;width:300px;text-align:center;top:200px;font-size:12px;line-height:1.149;white-space:nowrap;color:#1f2d3d;font-weight:normal;">D</div><div style="position:absolute;left:386px;width:300px;text-align:center;top:200px;font-size:12px;line-height:1.149;white-space:nowrap;color:#1f2d3d;font-weight:normal;">E</div><div style="position:absolute;left:524px;width:300px;text-align:center;top:200px;font-size:12px;line-height:1.149;white-space:nowrap;color:#1f2d3d;font-weight:normal;">F</div><div style="position:absolute;left:622px;width:300px;text-align:center;top:200px;font-size:12px;line-height:1.149;white-space:nowrap;color:#1f2d3d;font-weight:normal;">G</div><div style="position:absolute;left:-97px;width:300px;text-align:center;top:220px;font-size:12px;line-height:1.149;white-space:nowrap;color:#1f2d3d;font-weight:normal;letter-spacing:1px;text-indent:1px">1</div><div style="position:absolute;left:-97px;width:300px;text-align:center;top:240px;font-size:12px;line-height:1.149;white-space:nowrap;color:#1f2d3d;font-weight:normal;letter-spacing:1px;text-indent:1px">2</div><div style="position:absolute;left:-97px;width:300px;text-align:center;top:260px;font-size:12px;line-height:1.149;white-space:nowrap;color:#1f2d3d;font-weight:normal;letter-spacing:1px;text-indent:1px">3</div><div style="position:absolute;left:-97px;width:300px;text-align:center;top:280px;font-size:12px;line-height:1.149;white-space:nowrap;color:#1f2d3d;font-weight:normal;letter-spacing:1px;text-indent:1px">4</div><div style="position:absolute;left:-97px;width:300px;text-align:center;top:300px;font-size:12px;line-height:1.149;white-space:nowrap;color:#1f2d3d;font-weight:normal;letter-spacing:1px;text-indent:1px">5</div><div style="position:absolute;left:-97px;width:300px;text-align:center;top:320px;font-size:12px;line-height:1.149;white-space:nowrap;color:#1f2d3d;font-weight:normal;letter-spacing:1px;text-indent:1px">6</div><div style="position:absolute;left:-97px;width:300px;text-align:center;top:340px;font-size:12px;line-height:1.149;white-space:nowrap;color:#1f2d3d;font-weight:normal;letter-spacing:1px;text-indent:1px">7</div><div style="position:absolute;left:-97px;width:300px;text-align:center;top:360px;font-size:12px;line-height:1.149;white-space:nowrap;color:#1f2d3d;font-weight:normal;letter-spacing:1px;text-indent:1px">8</div><div style="position:absolute;left:-97px;width:300px;text-align:center;top:380px;font-size:12px;line-height:1.149;white-space:nowrap;color:#1f2d3d;font-weight:normal;letter-spacing:1px;text-indent:1px">9</div><div style="position:absolute;left:-97px;width:300px;text-align:center;top:400px;font-size:12px;line-height:1.149;white-space:nowrap;color:#1f2d3d;font-weight:normal;letter-spacing:1px;text-indent:1px">10</div><div style="position:absolute;left:-97px;width:300px;text-align:center;top:420px;font-size:12px;line-height:1.149;white-space:nowrap;color:#1f2d3d;font-weight:normal;letter-spacing:1px;text-indent:1px">11</div><div style="position:absolute;left:-97px;width:300px;text-align:center;top:440px;font-size:12px;line-height:1.149;white-space:nowrap;color:#1f2d3d;font-weight:normal;letter-spacing:1px;text-indent:1px">12</div><div style="position:absolute;left:-97px;width:300px;text-align:center;top:460px;font-size:12px;line-height:1.149;white-space:nowrap;color:#1f2d3d;font-weight:normal;letter-spacing:1px;text-indent:1px">13</div><div style="position:absolute;left:-97px;width:300px;text-align:center;top:480px;font-size:12px;line-height:1.149;white-space:nowrap;color:#1f2d3d;font-weight:normal;letter-spacing:1px;text-indent:1px">14</div><div style="position:absolute;left:-97px;width:300px;text-align:center;top:500px;font-size:12px;line-height:1.149;white-space:nowrap;color:#1f2d3d;font-weight:normal;letter-spacing:1px;text-indent:1px">15</div><div style="position:absolute;left:-97px;width:300px;text-align:center;top:520px;font-size:12px;line-height:1.149;white-space:nowrap;color:#1f2d3d;font-weight:normal;letter-spacing:1px;text-indent:1px">16</div><div style="position:absolute;left:-97px;width:300px;text-align:center;top:540px;font-size:12px;line-height:1.149;white-space:nowrap;color:#1f2d3d;font-weight:normal;letter-spacing:1px;text-indent:1px">17</div><div style="position:absolute;left:-97px;width:300px;text-align:center;top:560px;font-size:12px;line-height:1.149;white-space:nowrap;color:#1f2d3d;font-weight:normal;letter-spacing:1px;text-indent:1px">18</div><div style="position:absolute;left:-97px;width:300px;text-align:center;top:580px;font-size:12px;line-height:1.149;white-space:nowrap;color:#1f2d3d;font-weight:normal;letter-spacing:1px;text-indent:1px">19</div><div style="position:absolute;left:-97px;width:300px;text-align:center;top:600px;font-size:12px;line-height:1.149;white-space:nowrap;color:#1f2d3d;font-weight:normal;letter-spacing:1px;text-indent:1px">20</div><div style="position:absolute;left:-97px;width:300px;text-align:center;top:620px;font-size:12px;line-height:1.149;white-space:nowrap;color:#1f2d3d;font-weight:normal;letter-spacing:1px;text-indent:1px">21</div><div style="position:absolute;left:-97px;width:300px;text-align:center;top:640px;font-size:12px;line-height:1.149;white-space:nowrap;color:#1f2d3d;font-weight:normal;letter-spacing:1px;text-indent:1px">22</div><div style="position:absolute;left:-97px;width:300px;text-align:center;top:660px;font-size:12px;line-height:1.149;white-space:nowrap;color:#1f2d3d;font-weight:normal;letter-spacing:1px;text-indent:1px">23</div><div style="position:absolute;left:-97px;width:300px;text-align:center;top:680px;font-size:12px;line-height:1.149;white-space:nowrap;color:#1f2d3d;font-weight:normal;letter-spacing:1px;text-indent:1px">24</div><div style="position:absolute;left:-29px;width:300px;text-align:center;top:259px;font-size:13.5px;line-height:1.149;white-space:nowrap;color:#ffffff;font-weight:bold;">Наименование</div><div style="position:absolute;left:77px;width:300px;text-align:center;top:259px;font-size:13.5px;line-height:1.149;white-space:nowrap;color:#ffffff;font-weight:bold;">Дата</div><div style="position:absolute;left:179px;width:300px;text-align:center;top:259px;font-size:13.5px;line-height:1.149;white-space:nowrap;color:#ffffff;font-weight:bold;">Количество</div><div style="position:absolute;left:272px;width:300px;text-align:center;top:259px;font-size:13.5px;line-height:1.149;white-space:nowrap;color:#ffffff;font-weight:bold;">Цена</div><div style="position:absolute;left:386px;width:300px;text-align:center;top:259px;font-size:13.5px;line-height:1.149;white-space:nowrap;color:#ffffff;font-weight:bold;">Сумма</div><div style="position:absolute;left:68px;top:279px;font-size:13px;line-height:1.149;white-space:nowrap;color:#000;font-weight:normal;">Картофель</div><div style="position:absolute;left:77px;width:300px;text-align:center;top:279px;font-size:12.5px;line-height:1.149;white-space:nowrap;color:#000;font-weight:normal;">30.04.2015</div><div style="position:absolute;left:179px;width:300px;text-align:center;top:279px;font-size:12.5px;line-height:1.149;white-space:nowrap;color:#000;font-weight:normal;">234</div><div style="position:absolute;left:272px;width:300px;text-align:center;top:279px;font-size:12.5px;line-height:1.149;white-space:nowrap;color:#000;font-weight:normal;">45</div><div style="position:absolute;left:386px;width:300px;text-align:center;top:279px;font-size:12.5px;line-height:1.149;white-space:nowrap;color:#000;font-weight:normal;">10526</div><div style="position:absolute;left:68px;top:299px;font-size:13px;line-height:1.149;white-space:nowrap;color:#000;font-weight:normal;">Картофель</div><div style="position:absolute;left:77px;width:300px;text-align:center;top:299px;font-size:12.5px;line-height:1.149;white-space:nowrap;color:#000;font-weight:normal;">30.04.2015</div><div style="position:absolute;left:179px;width:300px;text-align:center;top:299px;font-size:12.5px;line-height:1.149;white-space:nowrap;color:#000;font-weight:normal;">234</div><div style="position:absolute;left:272px;width:300px;text-align:center;top:299px;font-size:12.5px;line-height:1.149;white-space:nowrap;color:#000;font-weight:normal;">45</div><div style="position:absolute;left:386px;width:300px;text-align:center;top:299px;font-size:12.5px;line-height:1.149;white-space:nowrap;color:#000;font-weight:normal;">10526</div><div style="position:absolute;left:68px;top:319px;font-size:13px;line-height:1.149;white-space:nowrap;color:#000;font-weight:normal;">Картофель</div><div style="position:absolute;left:77px;width:300px;text-align:center;top:319px;font-size:12.5px;line-height:1.149;white-space:nowrap;color:#000;font-weight:normal;">30.04.2015</div><div style="position:absolute;left:179px;width:300px;text-align:center;top:319px;font-size:12.5px;line-height:1.149;white-space:nowrap;color:#000;font-weight:normal;">234</div><div style="position:absolute;left:272px;width:300px;text-align:center;top:319px;font-size:12.5px;line-height:1.149;white-space:nowrap;color:#000;font-weight:normal;">45</div><div style="position:absolute;left:386px;width:300px;text-align:center;top:319px;font-size:12.5px;line-height:1.149;white-space:nowrap;color:#000;font-weight:normal;">10526</div><div style="position:absolute;left:68px;top:339px;font-size:13px;line-height:1.149;white-space:nowrap;color:#000;font-weight:normal;">Картофель</div><div style="position:absolute;left:77px;width:300px;text-align:center;top:339px;font-size:12.5px;line-height:1.149;white-space:nowrap;color:#000;font-weight:normal;">30.04.2015</div><div style="position:absolute;left:179px;width:300px;text-align:center;top:339px;font-size:12.5px;line-height:1.149;white-space:nowrap;color:#000;font-weight:normal;">234</div><div style="position:absolute;left:272px;width:300px;text-align:center;top:339px;font-size:12.5px;line-height:1.149;white-space:nowrap;color:#000;font-weight:normal;">45</div><div style="position:absolute;left:386px;width:300px;text-align:center;top:339px;font-size:12.5px;line-height:1.149;white-space:nowrap;color:#000;font-weight:normal;">10526</div><div style="position:absolute;left:68px;top:359px;font-size:13px;line-height:1.149;white-space:nowrap;color:#000;font-weight:normal;">Картофель</div><div style="position:absolute;left:77px;width:300px;text-align:center;top:359px;font-size:12.5px;line-height:1.149;white-space:nowrap;color:#000;font-weight:normal;">30.04.2015</div><div style="position:absolute;left:179px;width:300px;text-align:center;top:359px;font-size:12.5px;line-height:1.149;white-space:nowrap;color:#000;font-weight:normal;">234</div><div style="position:absolute;left:272px;width:300px;text-align:center;top:359px;font-size:12.5px;line-height:1.149;white-space:nowrap;color:#000;font-weight:normal;">45</div><div style="position:absolute;left:386px;width:300px;text-align:center;top:359px;font-size:12.5px;line-height:1.149;white-space:nowrap;color:#000;font-weight:normal;">10526</div><div style="position:absolute;left:68px;top:379px;font-size:13px;line-height:1.149;white-space:nowrap;color:#000;font-weight:normal;">Картофель</div><div style="position:absolute;left:77px;width:300px;text-align:center;top:379px;font-size:12.5px;line-height:1.149;white-space:nowrap;color:#000;font-weight:normal;">30.04.2015</div><div style="position:absolute;left:179px;width:300px;text-align:center;top:379px;font-size:12.5px;line-height:1.149;white-space:nowrap;color:#000;font-weight:normal;">234</div><div style="position:absolute;left:272px;width:300px;text-align:center;top:379px;font-size:12.5px;line-height:1.149;white-space:nowrap;color:#000;font-weight:normal;">45</div><div style="position:absolute;left:386px;width:300px;text-align:center;top:379px;font-size:12.5px;line-height:1.149;white-space:nowrap;color:#000;font-weight:normal;">10526</div><div style="position:absolute;left:68px;top:399px;font-size:13px;line-height:1.149;white-space:nowrap;color:#000;font-weight:normal;">Картофель</div><div style="position:absolute;left:77px;width:300px;text-align:center;top:399px;font-size:12.5px;line-height:1.149;white-space:nowrap;color:#000;font-weight:normal;">30.04.2015</div><div style="position:absolute;left:179px;width:300px;text-align:center;top:399px;font-size:12.5px;line-height:1.149;white-space:nowrap;color:#000;font-weight:normal;">234</div><div style="position:absolute;left:272px;width:300px;text-align:center;top:399px;font-size:12.5px;line-height:1.149;white-space:nowrap;color:#000;font-weight:normal;">45</div><div style="position:absolute;left:386px;width:300px;text-align:center;top:399px;font-size:12.5px;line-height:1.149;white-space:nowrap;color:#000;font-weight:normal;">10526</div><div style="position:absolute;left:68px;top:419px;font-size:13px;line-height:1.149;white-space:nowrap;color:#000;font-weight:normal;">Картофель</div><div style="position:absolute;left:77px;width:300px;text-align:center;top:419px;font-size:12.5px;line-height:1.149;white-space:nowrap;color:#000;font-weight:normal;">30.04.2015</div><div style="position:absolute;left:179px;width:300px;text-align:center;top:419px;font-size:12.5px;line-height:1.149;white-space:nowrap;color:#000;font-weight:normal;">234</div><div style="position:absolute;left:272px;width:300px;text-align:center;top:419px;font-size:12.5px;line-height:1.149;white-space:nowrap;color:#000;font-weight:normal;">45</div><div style="position:absolute;left:386px;width:300px;text-align:center;top:419px;font-size:12.5px;line-height:1.149;white-space:nowrap;color:#000;font-weight:normal;">10526</div><div style="position:absolute;left:68px;top:439px;font-size:13px;line-height:1.149;white-space:nowrap;color:#000;font-weight:normal;">Мясо</div><div style="position:absolute;left:77px;width:300px;text-align:center;top:439px;font-size:12.5px;line-height:1.149;white-space:nowrap;color:#000;font-weight:normal;">30.04.2016</div><div style="position:absolute;left:179px;width:300px;text-align:center;top:439px;font-size:12.5px;line-height:1.149;white-space:nowrap;color:#000;font-weight:normal;">91</div><div style="position:absolute;left:272px;width:300px;text-align:center;top:439px;font-size:12.5px;line-height:1.149;white-space:nowrap;color:#000;font-weight:normal;">236</div><div style="position:absolute;left:386px;width:300px;text-align:center;top:439px;font-size:12.5px;line-height:1.149;white-space:nowrap;color:#000;font-weight:normal;">21546</div><div style="position:absolute;left:68px;top:459px;font-size:13px;line-height:1.149;white-space:nowrap;color:#000;font-weight:normal;">Мясо</div><div style="position:absolute;left:77px;width:300px;text-align:center;top:459px;font-size:12.5px;line-height:1.149;white-space:nowrap;color:#000;font-weight:normal;">30.04.2016</div><div style="position:absolute;left:179px;width:300px;text-align:center;top:459px;font-size:12.5px;line-height:1.149;white-space:nowrap;color:#000;font-weight:normal;">91</div><div style="position:absolute;left:272px;width:300px;text-align:center;top:459px;font-size:12.5px;line-height:1.149;white-space:nowrap;color:#000;font-weight:normal;">236</div><div style="position:absolute;left:386px;width:300px;text-align:center;top:459px;font-size:12.5px;line-height:1.149;white-space:nowrap;color:#000;font-weight:normal;">21546</div><div style="position:absolute;left:68px;top:479px;font-size:13px;line-height:1.149;white-space:nowrap;color:#000;font-weight:normal;">Мясо</div><div style="position:absolute;left:77px;width:300px;text-align:center;top:479px;font-size:12.5px;line-height:1.149;white-space:nowrap;color:#000;font-weight:normal;">30.04.2016</div><div style="position:absolute;left:179px;width:300px;text-align:center;top:479px;font-size:12.5px;line-height:1.149;white-space:nowrap;color:#000;font-weight:normal;">91</div><div style="position:absolute;left:272px;width:300px;text-align:center;top:479px;font-size:12.5px;line-height:1.149;white-space:nowrap;color:#000;font-weight:normal;">236</div><div style="position:absolute;left:386px;width:300px;text-align:center;top:479px;font-size:12.5px;line-height:1.149;white-space:nowrap;color:#000;font-weight:normal;">21546</div><div style="position:absolute;left:68px;top:499px;font-size:13px;line-height:1.149;white-space:nowrap;color:#000;font-weight:normal;">Мясо</div><div style="position:absolute;left:77px;width:300px;text-align:center;top:499px;font-size:12.5px;line-height:1.149;white-space:nowrap;color:#000;font-weight:normal;">30.04.2016</div><div style="position:absolute;left:179px;width:300px;text-align:center;top:499px;font-size:12.5px;line-height:1.149;white-space:nowrap;color:#000;font-weight:normal;">91</div><div style="position:absolute;left:272px;width:300px;text-align:center;top:499px;font-size:12.5px;line-height:1.149;white-space:nowrap;color:#000;font-weight:normal;">236</div><div style="position:absolute;left:386px;width:300px;text-align:center;top:499px;font-size:12.5px;line-height:1.149;white-space:nowrap;color:#000;font-weight:normal;">21546</div><div style="position:absolute;left:68px;top:519px;font-size:13px;line-height:1.149;white-space:nowrap;color:#000;font-weight:normal;">Мясо</div><div style="position:absolute;left:77px;width:300px;text-align:center;top:519px;font-size:12.5px;line-height:1.149;white-space:nowrap;color:#000;font-weight:normal;">30.04.2016</div><div style="position:absolute;left:179px;width:300px;text-align:center;top:519px;font-size:12.5px;line-height:1.149;white-space:nowrap;color:#000;font-weight:normal;">91</div><div style="position:absolute;left:272px;width:300px;text-align:center;top:519px;font-size:12.5px;line-height:1.149;white-space:nowrap;color:#000;font-weight:normal;">236</div><div style="position:absolute;left:386px;width:300px;text-align:center;top:519px;font-size:12.5px;line-height:1.149;white-space:nowrap;color:#000;font-weight:normal;">21546</div><div style="position:absolute;left:68px;top:539px;font-size:13px;line-height:1.149;white-space:nowrap;color:#000;font-weight:normal;">Мясо</div><div style="position:absolute;left:77px;width:300px;text-align:center;top:539px;font-size:12.5px;line-height:1.149;white-space:nowrap;color:#000;font-weight:normal;">30.04.2016</div><div style="position:absolute;left:179px;width:300px;text-align:center;top:539px;font-size:12.5px;line-height:1.149;white-space:nowrap;color:#000;font-weight:normal;">91</div><div style="position:absolute;left:272px;width:300px;text-align:center;top:539px;font-size:12.5px;line-height:1.149;white-space:nowrap;color:#000;font-weight:normal;">236</div><div style="position:absolute;left:386px;width:300px;text-align:center;top:539px;font-size:12.5px;line-height:1.149;white-space:nowrap;color:#000;font-weight:normal;">21546</div><div style="position:absolute;left:68px;top:559px;font-size:13px;line-height:1.149;white-space:nowrap;color:#000;font-weight:normal;">Мясо</div><div style="position:absolute;left:77px;width:300px;text-align:center;top:559px;font-size:12.5px;line-height:1.149;white-space:nowrap;color:#000;font-weight:normal;">30.04.2016</div><div style="position:absolute;left:179px;width:300px;text-align:center;top:559px;font-size:12.5px;line-height:1.149;white-space:nowrap;color:#000;font-weight:normal;">91</div><div style="position:absolute;left:272px;width:300px;text-align:center;top:559px;font-size:12.5px;line-height:1.149;white-space:nowrap;color:#000;font-weight:normal;">236</div><div style="position:absolute;left:386px;width:300px;text-align:center;top:559px;font-size:12.5px;line-height:1.149;white-space:nowrap;color:#000;font-weight:normal;">21546</div><div style="position:absolute;left:68px;top:579px;font-size:13px;line-height:1.149;white-space:nowrap;color:#000;font-weight:normal;">Мясо</div><div style="position:absolute;left:77px;width:300px;text-align:center;top:579px;font-size:12.5px;line-height:1.149;white-space:nowrap;color:#000;font-weight:normal;">30.04.2016</div><div style="position:absolute;left:179px;width:300px;text-align:center;top:579px;font-size:12.5px;line-height:1.149;white-space:nowrap;color:#000;font-weight:normal;">91</div><div style="position:absolute;left:272px;width:300px;text-align:center;top:579px;font-size:12.5px;line-height:1.149;white-space:nowrap;color:#000;font-weight:normal;">236</div><div style="position:absolute;left:386px;width:300px;text-align:center;top:579px;font-size:12.5px;line-height:1.149;white-space:nowrap;color:#000;font-weight:normal;">21546</div><div style="position:absolute;left:68px;top:599px;font-size:13px;line-height:1.149;white-space:nowrap;color:#000;font-weight:normal;">Мясо</div><div style="position:absolute;left:77px;width:300px;text-align:center;top:599px;font-size:12.5px;line-height:1.149;white-space:nowrap;color:#000;font-weight:normal;">30.04.2016</div><div style="position:absolute;left:179px;width:300px;text-align:center;top:599px;font-size:12.5px;line-height:1.149;white-space:nowrap;color:#000;font-weight:normal;">91</div><div style="position:absolute;left:272px;width:300px;text-align:center;top:599px;font-size:12.5px;line-height:1.149;white-space:nowrap;color:#000;font-weight:normal;">236</div><div style="position:absolute;left:386px;width:300px;text-align:center;top:599px;font-size:12.5px;line-height:1.149;white-space:nowrap;color:#000;font-weight:normal;">21546</div><div style="position:absolute;left:68px;top:619px;font-size:13px;line-height:1.149;white-space:nowrap;color:#000;font-weight:normal;">Рыба</div><div style="position:absolute;left:77px;width:300px;text-align:center;top:619px;font-size:12.5px;line-height:1.149;white-space:nowrap;color:#000;font-weight:normal;">30.04.2016</div><div style="position:absolute;left:179px;width:300px;text-align:center;top:619px;font-size:12.5px;line-height:1.149;white-space:nowrap;color:#000;font-weight:normal;">60</div><div style="position:absolute;left:272px;width:300px;text-align:center;top:619px;font-size:12.5px;line-height:1.149;white-space:nowrap;color:#000;font-weight:normal;">289</div><div style="position:absolute;left:386px;width:300px;text-align:center;top:619px;font-size:12.5px;line-height:1.149;white-space:nowrap;color:#000;font-weight:normal;">15461</div><div style="position:absolute;left:68px;top:639px;font-size:13px;line-height:1.149;white-space:nowrap;color:#000;font-weight:normal;">Рыба</div><div style="position:absolute;left:77px;width:300px;text-align:center;top:639px;font-size:12.5px;line-height:1.149;white-space:nowrap;color:#000;font-weight:normal;">30.04.2016</div><div style="position:absolute;left:179px;width:300px;text-align:center;top:639px;font-size:12.5px;line-height:1.149;white-space:nowrap;color:#000;font-weight:normal;">60</div><div style="position:absolute;left:272px;width:300px;text-align:center;top:639px;font-size:12.5px;line-height:1.149;white-space:nowrap;color:#000;font-weight:normal;">289</div><div style="position:absolute;left:386px;width:300px;text-align:center;top:639px;font-size:12.5px;line-height:1.149;white-space:nowrap;color:#000;font-weight:normal;">15461</div><div style="position:absolute;left:68px;top:659px;font-size:13px;line-height:1.149;white-space:nowrap;color:#000;font-weight:normal;">Рыба</div><div style="position:absolute;left:77px;width:300px;text-align:center;top:659px;font-size:12.5px;line-height:1.149;white-space:nowrap;color:#000;font-weight:normal;">30.04.2016</div><div style="position:absolute;left:179px;width:300px;text-align:center;top:659px;font-size:12.5px;line-height:1.149;white-space:nowrap;color:#000;font-weight:normal;">60</div><div style="position:absolute;left:272px;width:300px;text-align:center;top:659px;font-size:12.5px;line-height:1.149;white-space:nowrap;color:#000;font-weight:normal;">289</div><div style="position:absolute;left:386px;width:300px;text-align:center;top:659px;font-size:12.5px;line-height:1.149;white-space:nowrap;color:#000;font-weight:normal;">15461</div><div style="position:absolute;left:68px;top:679px;font-size:13px;line-height:1.149;white-space:nowrap;color:#000;font-weight:normal;">Рыба</div><div style="position:absolute;left:77px;width:300px;text-align:center;top:679px;font-size:12.5px;line-height:1.149;white-space:nowrap;color:#000;font-weight:normal;">30.04.2016</div><div style="position:absolute;left:179px;width:300px;text-align:center;top:679px;font-size:12.5px;line-height:1.149;white-space:nowrap;color:#000;font-weight:normal;">60</div><div style="position:absolute;left:272px;width:300px;text-align:center;top:679px;font-size:12.5px;line-height:1.149;white-space:nowrap;color:#000;font-weight:normal;">289</div><div style="position:absolute;left:386px;width:300px;text-align:center;top:679px;font-size:12.5px;line-height:1.149;white-space:nowrap;color:#000;font-weight:normal;">15461</div><div style="position:absolute;left:738px;top:473px;width:47px;height:23px;border:3px solid #1a1416;border-right:none;box-sizing:border-box;"></div><div style="position:absolute;left:785px;top:199px;width:16px;height:495px;background:#dfe2e6;border-left:1px solid #cfd3d8;box-sizing:border-box;"></div><div style="position:absolute;left:786px;top:199px;width:14px;height:4px;background:#fff;border:1px solid #9aa1a9;box-sizing:border-box;"></div><svg style="position:absolute;left:788px;top:208px;" width="9" height="5" viewBox="0 0 9 5"><path d="M0 5 L4.5 0 L9 5z" fill="#3c444d"/></svg><div style="position:absolute;left:786px;top:220px;width:14px;height:102px;background:linear-gradient(90deg,#e9ecef,#f4f6f8 50%,#e2e6ea);border:1px solid #9ca3ab;border-radius:2px;box-sizing:border-box;"></div><svg style="position:absolute;left:789px;top:268px;" width="8" height="6" viewBox="0 0 8 6"><path d="M0 0.5h8M0 2.5h8M0 4.5h8" stroke="#5e656d" stroke-width="1"/></svg><svg style="position:absolute;left:788px;top:682px;" width="9" height="5" viewBox="0 0 9 5"><path d="M0 0 L9 0 L4.5 5z" fill="#3c444d"/></svg><div style="position:absolute;left:801px;top:174px;width:1px;height:557px;background:#8e96a0;"></div><div style="position:absolute;left:40px;top:693px;width:761px;height:16px;background:linear-gradient(#eef0f3,#e2e5e9);border-top:1px solid #a4abb3;box-sizing:border-box;"></div><svg style="position:absolute;left:45px;top:697px;" width="8" height="7" viewBox="0 0 8 7"><path d="M0.5 0v7M7 0L2 3.5L7 7z" fill="#4f5761" stroke="#4f5761" stroke-width="0.6"/></svg><svg style="position:absolute;left:61px;top:697px;" width="8" height="7" viewBox="0 0 8 7"><path d="M5 0L0 3.5L5 7z" fill="#4f5761" stroke="#4f5761" stroke-width="0.6"/></svg><svg style="position:absolute;left:76px;top:697px;" width="8" height="7" viewBox="0 0 8 7"><path d="M0 0L5 3.5L0 7z" fill="#4f5761" stroke="#4f5761" stroke-width="0.6"/></svg><svg style="position:absolute;left:90px;top:697px;" width="8" height="7" viewBox="0 0 8 7"><path d="M0 0L5 3.5L0 7zM6.5 0v7" fill="#4f5761" stroke="#4f5761" stroke-width="0.6"/></svg><svg style="position:absolute;left:100px;top:693px;" width="160" height="17" viewBox="0 0 160 17"><path d="M2.5 0.5 V15.5 H138 L148 0.5" fill="#fff" stroke="#9aa2ab"/></svg><svg style="position:absolute;left:236px;top:694px;" width="250" height="15" viewBox="0 0 250 15"><path d="M2 14.5 L12 0.5 H81 L71 14.5z" fill="#e6e9ed"/>
<path d="M71 14.5 L81 0.5 H145 L135 14.5z" fill="#e6e9ed"/>
<path d="M135 14.5 L145 0.5 H204 L194 14.5z" fill="#e6e9ed"/>
<path d="M194 14.5 L204 0.5 H233 L220 14.5z" fill="#e6e9ed"/>
<path d="M2 14.5 L12 0.5 M71 14.5 L81 0.5 M135 14.5 L145 0.5 M195 14.5 L204 0.5 M221 14.5 L233 0.5" stroke="#9aa2ab" stroke-width="1" fill="none"/></svg><div style="position:absolute;left:113px;top:695px;font-size:12.6px;line-height:1.149;white-space:nowrap;color:#222;font-weight:bold;">Продукты питания</div><div style="position:absolute;left:251px;top:695px;font-size:12px;line-height:1.149;white-space:nowrap;color:#30353b;font-weight:normal;">Таблица</div><div style="position:absolute;left:319px;top:695px;font-size:12px;line-height:1.149;white-space:nowrap;color:#30353b;font-weight:normal;">Рассчет</div><div style="position:absolute;left:384px;top:695px;font-size:12px;line-height:1.149;white-space:nowrap;color:#30353b;font-weight:normal;">Вывод</div><svg style="position:absolute;left:441px;top:696px;" width="15" height="12" viewBox="0 0 15 12"><rect x="2.5" y="3.5" width="11" height="8" rx="2" fill="#dfe8f2" stroke="#5a6672"/><path d="M3 0.5l0.8 1.8 1.9 0.2-1.4 1.3 0.4 1.9-1.7-1-1.7 1 0.4-1.9L0.3 2.5l1.9-0.2z" fill="#f4b530"/></svg><div style="position:absolute;left:487px;top:695px;width:8px;height:12px;background:#fff;border:1px solid #8b939c;box-sizing:border-box;"></div><div style="position:absolute;left:490px;top:698px;width:1px;height:6px;background:#444;"></div><svg style="position:absolute;left:500px;top:697px;" width="6" height="8" viewBox="0 0 6 8"><path d="M6 0 L0 4 L6 8z" fill="#3c444d"/></svg><div style="position:absolute;left:512px;top:694px;width:217px;height:14px;background:linear-gradient(#f4f6f8,#e6e9ec);border:1px solid #9ca3ab;border-radius:2px;box-sizing:border-box;"></div><svg style="position:absolute;left:616px;top:698px;" width="8" height="7" viewBox="0 0 8 7"><path d="M0.5 0v7M2.5 0v7M4.5 0v7M6.5 0v7" stroke="#5e656d" stroke-width="1"/></svg><svg style="position:absolute;left:765px;top:697px;" width="6" height="8" viewBox="0 0 6 8"><path d="M0 0 L6 4 L0 8z" fill="#3c444d"/></svg><div style="position:absolute;left:777px;top:695px;width:8px;height:12px;background:#fff;border:1px solid #8b939c;box-sizing:border-box;"></div><div style="position:absolute;left:780px;top:698px;width:1px;height:6px;background:#444;"></div><div style="position:absolute;left:40px;top:708px;width:761px;height:23px;background:linear-gradient(#f7f8fa,#e3e6e9 20%,#d9dce0 60%,#c9cdd2);border-top:1px solid #a9afb6;border-bottom:1px solid #7d848c;box-sizing:border-box;"></div><div style="position:absolute;left:48px;top:714px;font-size:12px;line-height:1.149;white-space:nowrap;color:#1f2329;font-weight:normal;">Готово</div><div style="position:absolute;left:94px;top:711px;width:1px;height:19px;background:#a9afb6;"></div><div style="position:absolute;left:129px;top:711px;width:1px;height:19px;background:#a9afb6;"></div><div style="position:absolute;left:545px;top:711px;width:1px;height:19px;background:#a9afb6;"></div><svg style="position:absolute;left:104px;top:713px;" width="15" height="13" viewBox="0 0 15 13"><rect x="1.5" y="2.5" width="13" height="10" fill="#fff" stroke="#3f6fb5"/><rect x="2" y="3" width="12" height="3" fill="#3f7fd0"/><circle cx="3.5" cy="3" r="2.8" fill="#e2602e"/><g stroke="#6a9bd8"><path d="M4 8.5h3M8 8.5h5M4 10.5h3M8 10.5h5"/></g></svg><div style="position:absolute;left:549px;top:711px;width:19px;height:18px;background:linear-gradient(#fde6a8,#f8c96a);border:1px solid #d7a649;border-radius:2px;box-sizing:border-box;"></div><svg style="position:absolute;left:552px;top:714px;" width="13" height="12" viewBox="0 0 13 12"><rect x="0.5" y="0.5" width="12" height="11" fill="#fff" stroke="#3d4650"/><path d="M0 4.5h13M0 7.5h13M4.5 0v12M8.5 0v12" stroke="#3d4650"/></svg><svg style="position:absolute;left:571px;top:714px;" width="13" height="12" viewBox="0 0 13 12"><rect x="0.5" y="0.5" width="12" height="11" fill="#f4f6f8" stroke="#4c545d"/><rect x="3.5" y="2.5" width="6" height="7" fill="#fff" stroke="#4c545d"/><path d="M4.5 5h4M4.5 7h4" stroke="#777"/></svg><svg style="position:absolute;left:590px;top:714px;" width="13" height="12" viewBox="0 0 13 12"><rect x="0.5" y="0.5" width="12" height="11" fill="#f4f6f8" stroke="#4c545d"/><path d="M6.5 0v7M0 7.5h13" stroke="#4c545d"/><rect x="1.5" y="1.5" width="4" height="5" fill="#fff"/><rect x="7.5" y="1.5" width="4" height="5" fill="#fff"/></svg><div style="position:absolute;left:615px;top:714px;font-size:11px;line-height:1.149;white-space:nowrap;color:#1f2329;font-weight:normal;">100%</div><svg style="position:absolute;left:649px;top:711px;" width="18" height="18" viewBox="0 0 18 18"><circle cx="9" cy="9" r="8" fill="url(#zg)" stroke="#737b84"/><defs><linearGradient id="zg" x1="0" y1="0" x2="0" y2="1"><stop offset="0" stop-color="#fff"/><stop offset="1" stop-color="#d6dade"/></linearGradient></defs><path d="M5 9h8" stroke="#333" stroke-width="2"/></svg><div style="position:absolute;left:667px;top:720px;width:98px;height:1px;background:repeating-linear-gradient(90deg,#8a9199 0 1px,transparent 1px 2px);"></div><div style="position:absolute;left:667px;top:721px;width:98px;height:1px;background:#f6f7f8;"></div><svg style="position:absolute;left:710px;top:711px;" width="12" height="15" viewBox="0 0 12 15"><path d="M0.5 0.5h11v9l-5.5 5l-5.5-5z" fill="#f6f7f9" stroke="#6b737c"/></svg><svg style="position:absolute;left:765px;top:711px;" width="18" height="18" viewBox="0 0 18 18"><circle cx="9" cy="9" r="8" fill="url(#zg)" stroke="#737b84"/><path d="M5 9h8M9 5v8" stroke="#333" stroke-width="2"/></svg><svg style="position:absolute;left:788px;top:718px;" width="11" height="11" viewBox="0 0 11 11"><g fill="#a7adb4"><rect x="8" y="0" width="2" height="2"/><rect x="4" y="4" width="2" height="2"/><rect x="8" y="4" width="2" height="2"/><rect x="0" y="8" width="2" height="2"/><rect x="4" y="8" width="2" height="2"/><rect x="8" y="8" width="2" height="2"/></g></svg><div style="position:absolute;left:152px;top:53px;width:56px;height:10px;background:linear-gradient(rgba(110,118,128,0.55),rgba(150,158,168,0.15) 80%,rgba(150,158,168,0));"></div><div style="position:absolute;left:153px;top:56px;width:2px;height:28px;background:linear-gradient(90deg,rgba(120,128,138,0.5),rgba(120,128,138,0));"></div><div style="position:absolute;left:148px;top:49px;width:64px;height:40px;border-radius:12px;box-shadow:0px 3px 5px rgba(0,0,0,0.5), inset 2px 4px 5px rgba(0,0,0,0.42);"></div><div style="position:absolute;left:148px;top:49px;width:64px;height:40px;border:5px solid #ff1800;border-radius:12px;box-sizing:border-box;"></div><div style="position:absolute;left:619px;top:88px;width:93px;height:61px;border-radius:12px;box-shadow:0px 3px 5px rgba(0,0,0,0.5), inset 2px 4px 5px rgba(0,0,0,0.42);"></div><div style="position:absolute;left:619px;top:88px;width:93px;height:61px;border:5px solid #ff1800;border-radius:12px;box-sizing:border-box;"></div><div style="position:absolute;left:204px;top:58px;width:44px;height:44px;border-radius:50%;background:radial-gradient(circle at 32% 32%,#eda676 0%,#ee9a68 20%,#f17848 42%,#f2603a 62%,#ee4a28 85%,#e63a1c 100%);box-shadow:0 0 0 1px rgba(140,50,30,0.55);"></div><svg style="position:absolute;left:218px;top:70px;overflow:visible" width="16" height="22" viewBox="0 0 16 22"><path d="M3 4.5 L8.5 1.5 H11 V16.5 H14 V20 H2 V16.5 H6 V5.5 L3 7z" fill="#fff" stroke="#3a2a26" stroke-width="1.4" stroke-linejoin="round"/></svg><div style="position:absolute;left:583px;top:80px;width:46px;height:46px;border-radius:50%;background:radial-gradient(circle at 32% 32%,#eda676 0%,#ee9a68 20%,#f17848 42%,#f2603a 62%,#ee4a28 85%,#e63a1c 100%);box-shadow:0 0 0 1px rgba(140,50,30,0.55);"></div><svg style="position:absolute;left:598px;top:92px;overflow:visible" width="18" height="23" viewBox="-0.5 -0.5 17 22"><path d="M2 5 Q4 1.5 8.5 1.5 Q14.5 1.5 14.5 7 Q14.5 10.5 8 15.5 H15 V20 H1.5 V16.5 Q9.5 9.5 9.5 7.2 Q9.5 5.5 7.8 5.5 Q5.5 5.5 3.5 7.8z" fill="#fff" stroke="#3a2a26" stroke-width="1.4" stroke-linejoin="round"/></svg>
</body></html>
